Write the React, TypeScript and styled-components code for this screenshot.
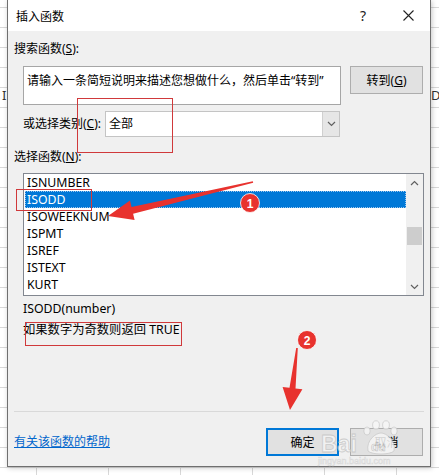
import React from "react";
import styled, { createGlobalStyle } from "styled-components";

const Global = createGlobalStyle`
  html, body { margin: 0; padding: 0; }
  body {
    font-family: "Noto Sans", "Noto Sans CJK SC", sans-serif;
    font-size: 12px;
    color: #000;
  }
`;

const Sheet = styled.div`
  position: relative;
  width: 439px;
  height: 475px;
  overflow: hidden;
  box-sizing: border-box;
  padding: 0 8px 8px 7px;
  background-color: #fff;
  background-image:
    repeating-linear-gradient(to bottom, transparent 0 7px, #d8d8d8 7px 8px, transparent 8px 20px),
    repeating-linear-gradient(to right, transparent 0 36px, #d8d8d8 36px 37px, transparent 37px 72px);
`;

const CellText = styled.span<{ $left: number }>`
  position: absolute;
  left: ${(p) => p.$left}px;
  top: 86px;
  font-size: 13px;
  color: #333;
`;

const Dialog = styled.div`
  position: relative;
  width: 424px;
  height: 467px;
  box-sizing: border-box;
  border: 1px solid #6f6f6f;
  border-top: none;
  background: #f0f0f0;
  display: flex;
  flex-direction: column;
  box-shadow: 1px 1px 5px rgba(0, 0, 0, 0.22);
`;

const TitleBar = styled.div`
  height: 31px;
  background: #fff;
  display: flex;
  align-items: center;
  padding-left: 8px;
`;

const TitleText = styled.div`
  flex: 1;
  font-size: 12px;
`;

const TitleButton = styled.div<{ $w: number; $gap?: number }>`
  width: ${(p) => p.$w}px;
  margin-right: ${(p) => p.$gap ?? 0}px;
  height: 31px;
  display: flex;
  align-items: center;
  justify-content: center;
  font-size: 14px;
  color: #222;
`;

const Body = styled.div`
  flex: 1;
  display: flex;
  flex-direction: column;
  padding: 0 7px 0 6px;
`;

const Label = styled.div<{ $top: number }>`
  margin-top: ${(p) => p.$top}px;
  line-height: 18px;
  font-size: 12px;
  white-space: nowrap;
`;

const Row = styled.div<{ $top: number }>`
  display: flex;
  align-items: flex-start;
  margin-top: ${(p) => p.$top}px;
  padding-left: 9px;
`;

const SearchBox = styled.div`
  width: 318px;
  height: 39px;
  box-sizing: border-box;
  background: #fff;
  border: 1px solid #a6a6a6;
  padding: 5px 3px;
  font-size: 12px;
  line-height: 18px;
  white-space: nowrap;
`;

const Button = styled.div<{ $primary?: boolean }>`
  width: 73px;
  height: 28px;
  box-sizing: border-box;
  background: #e1e1e1;
  border: ${(p) => (p.$primary ? "2px solid #0078d7" : "1px solid #adadad")};
  display: flex;
  align-items: center;
  justify-content: center;
  font-size: 12px;
`;

const SideButton = styled(Button)`
  margin-left: 9px;
`;

const Key = styled.span`
  text-decoration: underline;
`;

const CategoryLabel = styled.div`
  width: 82px;
  line-height: 26px;
  font-size: 12px;
  white-space: nowrap;
`;

const Select = styled.div`
  width: 235px;
  height: 26px;
  box-sizing: border-box;
  background: #fff;
  border: 1px solid #c4c4c4;
  display: flex;
  align-items: stretch;
`;

const SelectValue = styled.div`
  flex: 1;
  padding-left: 3px;
  line-height: 24px;
  font-size: 12px;
`;

const SelectArrow = styled.div`
  width: 16px;
  background: #e6e6e6;
  border-left: 1px solid #d0d0d0;
  display: flex;
  align-items: center;
  justify-content: center;
`;

const ListBox = styled.div`
  margin: 7px 0 0 9px;
  width: 401px;
  height: 123px;
  box-sizing: border-box;
  border: 1px solid #828790;
  background: #fff;
  display: flex;
`;

const ListItems = styled.div`
  flex: 1;
  padding-left: 1px;
`;

const ListRow = styled.div<{ $selected?: boolean }>`
  height: 17px;
  line-height: 17px;
  padding-left: 2px;
  box-sizing: border-box;
  font-size: 12.3px;
  background: ${(p) => (p.$selected ? "#0078d7" : "transparent")};
  color: ${(p) => (p.$selected ? "#fff" : "#000")};
  outline: ${(p) => (p.$selected ? "1px dotted #9cc6ee" : "none")};
  outline-offset: -1px;
`;

const ScrollBar = styled.div`
  width: 17px;
  background: #f0f0f0;
  display: flex;
  flex-direction: column;
  align-items: center;
`;

const ScrollArrow = styled.div`
  height: 17px;
  width: 17px;
  display: flex;
  align-items: center;
  justify-content: center;
`;

const ScrollTrack = styled.div`
  flex: 1;
  width: 100%;
  padding-top: 36px;
`;

const Thumb = styled.div`
  height: 18px;
  margin: 0 1px;
  background: #cdcdcd;
`;

const Info = styled.div<{ $top: number }>`
  margin: ${(p) => p.$top}px 0 0 9px;
  line-height: 18px;
  font-size: 12.3px;
`;

const Footer = styled.div`
  margin-top: auto;
  display: flex;
  flex-direction: column;
`;

const Divider = styled.div`
  height: 1px;
  background: #d9d9d9;
  margin-right: -1px;
`;

const FooterRow = styled.div`
  display: flex;
  align-items: center;
  gap: 11px;
  margin: 16px 0 10px;
`;

const HelpLink = styled.a`
  flex: 1;
  color: #0066cc;
  text-decoration: underline;
  font-size: 12px;
  line-height: 18px;
`;

const Overlay = styled.svg`
  position: absolute;
  left: 0;
  top: 0;
  pointer-events: none;
`;

const Chevron = ({ up }: { up?: boolean }) => (
  <svg width="9" height="6" viewBox="0 0 9 6">
    <path
      d={up ? "M1 5 L4.5 1.5 L8 5" : "M1 1 L4.5 4.5 L8 1"}
      fill="none"
      stroke="#606060"
      strokeWidth="1.2"
    />
  </svg>
);

const functions = ["ISNUMBER", "ISODD", "ISOWEEKNUM", "ISPMT", "ISREF", "ISTEXT", "KURT"];

const red = "#e8322e";

export default function App() {
  return (
    <>
      <Global />
      <Sheet>
        <CellText $left={2}>I</CellText>
        <CellText $left={431}>D</CellText>
        <Dialog>
          <TitleBar>
            <TitleText>插入函数</TitleText>
            <TitleButton $w={30} $gap={8}>?</TitleButton>
            <TitleButton $w={44}>
              <svg width="11" height="11" viewBox="0 0 11 11">
                <path d="M0.5 0.5 L10.5 10.5 M10.5 0.5 L0.5 10.5" stroke="#222" strokeWidth="1.1" />
              </svg>
            </TitleButton>
          </TitleBar>
          <Body>
            <Label $top={9}>
              搜索函数(<Key>S</Key>):
            </Label>
            <Row $top={8}>
              <SearchBox>请输入一条简短说明来描述您想做什么，然后单击“转到”</SearchBox>
              <SideButton>
                转到(<Key>G</Key>)
              </SideButton>
            </Row>
            <Row $top={6}>
              <CategoryLabel>
                或选择类别(<Key>C</Key>):
              </CategoryLabel>
              <Select>
                <SelectValue>全部</SelectValue>
                <SelectArrow>
                  <Chevron />
                </SelectArrow>
              </Select>
            </Row>
            <Label $top={11}>
              选择函数(<Key>N</Key>):
            </Label>
            <ListBox>
              <ListItems>
                {functions.map((f) => (
                  <ListRow key={f} $selected={f === "ISODD"}>
                    {f}
                  </ListRow>
                ))}
              </ListItems>
              <ScrollBar>
                <ScrollArrow>
                  <Chevron up />
                </ScrollArrow>
                <ScrollTrack>
                  <Thumb />
                </ScrollTrack>
                <ScrollArrow>
                  <Chevron />
                </ScrollArrow>
              </ScrollBar>
            </ListBox>
            <Info $top={4}>ISODD(number)</Info>
            <Info $top={3}>如果数字为奇数则返回 TRUE</Info>
            <Footer>
              <Divider />
              <FooterRow>
                <HelpLink>有关该函数的帮助</HelpLink>
                <Button $primary>确定</Button>
                <Button>取消</Button>
              </FooterRow>
            </Footer>
          </Body>
        </Dialog>

        <Overlay width="439" height="475" viewBox="0 0 439 475">
          <g fill="none" stroke="#d0393b" strokeWidth="1">
            <rect x="77.5" y="98.5" width="95" height="54" />
            <rect x="16.5" y="189.5" width="75" height="21" />
            <rect x="25.5" y="322.5" width="156" height="23" />
          </g>
          <polygon
            fill={red}
            points="253.2,182.8 133.1,213.7 134.6,220 108,216 130,200.6 131.5,206.9 252.8,181.2"
          />
          <polygon
            fill={red}
            points="297.8,348.1 295.5,388.4 302.4,389.2 290,410 282.6,387 289.5,387.8 296.2,347.9"
          />
          <g>
            <circle cx="250" cy="203" r="9.5" fill={red} stroke="#fff" strokeWidth="0.8" />
            <text x="250" y="207.5" textAnchor="middle" fill="#fff" fontSize="12" fontWeight="bold" fontFamily="Liberation Sans, sans-serif">
              1
            </text>
            <circle cx="307" cy="340" r="9.5" fill={red} stroke="#fff" strokeWidth="0.8" />
            <text x="307" y="344.5" textAnchor="middle" fill="#fff" fontSize="12" fontWeight="bold" fontFamily="Liberation Sans, sans-serif">
              2
            </text>
          </g>
          <g opacity="0.85" fontFamily="Liberation Sans, sans-serif" fontWeight="bold">
            <text x="321" y="452" fontSize="23" fill="#f4f4f4" stroke="#c6c6c6" strokeWidth="0.8">
              Bai
            </text>
            <g fill="#f6f6f6" stroke="#c6c6c6" strokeWidth="0.8">
              <ellipse cx="367" cy="431" rx="3.2" ry="4" />
              <ellipse cx="376" cy="425" rx="3.4" ry="4.2" />
              <ellipse cx="386" cy="425" rx="3.4" ry="4.2" />
              <ellipse cx="394" cy="431" rx="3.2" ry="4" />
              <path d="M368 451 C366 440 376 433 381 433 C386 433 396 440 394 451 C390 455 372 455 368 451 Z" />
            </g>
            <text x="371" y="451" fontSize="12" fill="#f6f6f6" stroke="#bdbdbd" strokeWidth="0.6">
              du
            </text>
            <text x="318" y="464" fontSize="9" fill="#ececec" stroke="#d2d2d2" strokeWidth="0.4" fontWeight="normal">
              jingyan.baidu.com
            </text>
          </g>
        </Overlay>
      </Sheet>
    </>
  );
}
